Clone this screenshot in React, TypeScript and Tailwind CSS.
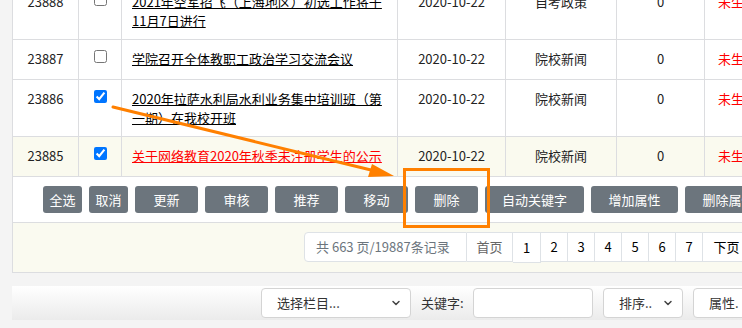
import { ChevronDown } from 'lucide-react'

const font = { fontFamily: '"Noto Sans CJK SC", "Liberation Sans", sans-serif' }

interface Row {
  id: string
  title: string[]
  category: string
  checked: boolean
  highlight?: boolean
  tall?: boolean
}

const rows: Row[] = [
  { id: '23888', title: ['2021年空军招飞（上海地区）初选工作将于', '11月7日进行'], category: '自考政策', checked: false, tall: true },
  { id: '23887', title: ['学院召开全体教职工政治学习交流会议'], category: '院校新闻', checked: false },
  { id: '23886', title: ['2020年拉萨水利局水利业务集中培训班（第', '一期）在我校开班'], category: '院校新闻', checked: true, tall: true },
  { id: '23885', title: ['关于网络教育2020年秋季未注册学生的公示'], category: '院校新闻', checked: true, highlight: true },
]

const buttons = [
  { label: '全选', w: 'w-[39px]' },
  { label: '取消', w: 'w-[39px]' },
  { label: '更新', w: 'w-[63px]' },
  { label: '审核', w: 'w-[63px]' },
  { label: '推荐', w: 'w-[63px]' },
  { label: '移动', w: 'w-[63px]' },
  { label: '删除', w: 'w-[63px]' },
  { label: '自动关键字', w: 'w-[99px]' },
  { label: '增加属性', w: 'w-[87px]' },
  { label: '删除属性', w: 'w-[87px]' },
]

function TableRow({ row }: { row: Row }) {
  const cell = 'border-r border-[#dcdde0] pt-[9px] leading-[19px] shrink-0'
  return (
    <div
      className={`flex border-b border-[#dcdde0] text-[13px] text-[#222] ${row.tall ? 'h-[57px]' : 'h-[40px]'} ${
        row.highlight ? 'bg-[#fafaef]' : 'bg-white'
      }`}
    >
      <div className={`${cell} w-[66px] text-center`}>{row.id}</div>
      <div className={`${cell} w-[43px] flex justify-center pt-[10px]`}>
        <input type="checkbox" defaultChecked={row.checked} className="w-[13px] h-[13px] m-0" />
      </div>
      <div className={`${cell} w-[276px] pl-[10px]`}>
        {row.title.map((t) => (
          <div key={t} className={`underline whitespace-nowrap ${row.highlight ? 'text-[#ff0000]' : 'text-black'}`}>
            {t}
          </div>
        ))}
      </div>
      <div className={`${cell} w-[108px] text-center`}>2020-10-22</div>
      <div className={`${cell} w-[111px] text-center`}>{row.category}</div>
      <div className={`${cell} w-[88px] text-center`}>0</div>
      <div className="pt-[9px] leading-[19px] pl-[13px] text-[#ff0000] whitespace-nowrap">未生效</div>
    </div>
  )
}

function FakeSelect({ label, w, chevron = true }: { label: string; w: string; chevron?: boolean }) {
  return (
    <div
      className={`${w} h-[30px] shrink-0 bg-white border border-[#d4d4d4] rounded-[4px] flex items-center justify-between pl-[15px] pr-[8px] text-[13px] text-[#333]`}
    >
      <span className="whitespace-nowrap">{label}</span>
      {chevron && <ChevronDown size={12} strokeWidth={3} className="text-[#444]" />}
    </div>
  )
}

export default function App() {
  const pages = ['2', '3', '4', '5', '6', '7']
  return (
    <div className="relative w-[742px] h-[328px] overflow-hidden bg-[#f4f4f4]" style={font}>
      <div className="ml-[12px] w-[780px] -mt-[17px] border-l border-b border-[#dcdde0]">
        {rows.map((r) => (
          <TableRow key={r.id} row={r} />
        ))}

        <div className="h-[46px] bg-white border-b border-[#dcdde0] flex gap-[7px] pl-[30px] pt-[9px]">
          {buttons.map((b) => (
            <button
              key={b.label}
              className={`${b.w} h-[27px] shrink-0 rounded-[3px] bg-[#6c757d] text-white text-[13px] flex items-center justify-center whitespace-nowrap`}
            >
              {b.label}
            </button>
          ))}
        </div>

        <div className="h-[49px] bg-[#fafaf0] pl-[291px] pt-[9px]">
          <div className="flex h-[30px] text-[13px]">
            <div className="w-[163px] shrink-0 bg-white border border-[#dee2e6] rounded-l-[4px] flex items-center pl-[11px] text-[#6c757d] whitespace-nowrap">
              共 663 页/19887条记录
            </div>
            <div className="w-[46px] shrink-0 bg-white border border-l-0 border-[#dee2e6] flex items-center justify-center text-[#666]">
              首页
            </div>
            <div className="w-[28px] shrink-0 h-[31px] bg-white border border-l-0 border-[#dee2e6] flex items-center justify-center text-black">
              1
            </div>
            {pages.map((p) => (
              <div
                key={p}
                className="w-[27px] shrink-0 bg-white border border-l-0 border-[#dee2e6] flex items-center justify-center text-black"
              >
                {p}
              </div>
            ))}
            <div className="w-[48px] shrink-0 bg-white border border-l-0 border-[#dee2e6] flex items-center justify-center text-black">
              下页
            </div>
          </div>
        </div>
      </div>

      <div className="mt-[13px] ml-[12px] h-[34px] w-[740px] bg-gradient-to-b from-white to-[#ebebeb] flex items-center pl-[249px] gap-[10px]">
        <FakeSelect label="选择栏目..." w="w-[150px]" />
        <span className="text-[13px] text-[#333] whitespace-nowrap w-[42px]">关键字:</span>
        <div className="w-[120px] h-[30px] shrink-0 bg-white border border-[#d4d4d4] rounded-[4px]" />
        <FakeSelect label="排序.." w="w-[80px]" />
        <FakeSelect label="属性." w="w-[80px]" chevron={false} />
      </div>

      {/* annotation overlay */}
      <svg className="absolute left-0 top-0 pointer-events-none" width={742} height={328}>
        <rect x={404.5} y={169.5} width={84} height={57} fill="none" stroke="#ff8000" strokeWidth={3} />
        <line x1={113} y1={107} x2={371} y2={170} stroke="#ff8000" strokeWidth={3} strokeLinecap="round" />
        <polygon points="394,176 368,177 372,164" fill="#ff8000" />
      </svg>
    </div>
  )
}
